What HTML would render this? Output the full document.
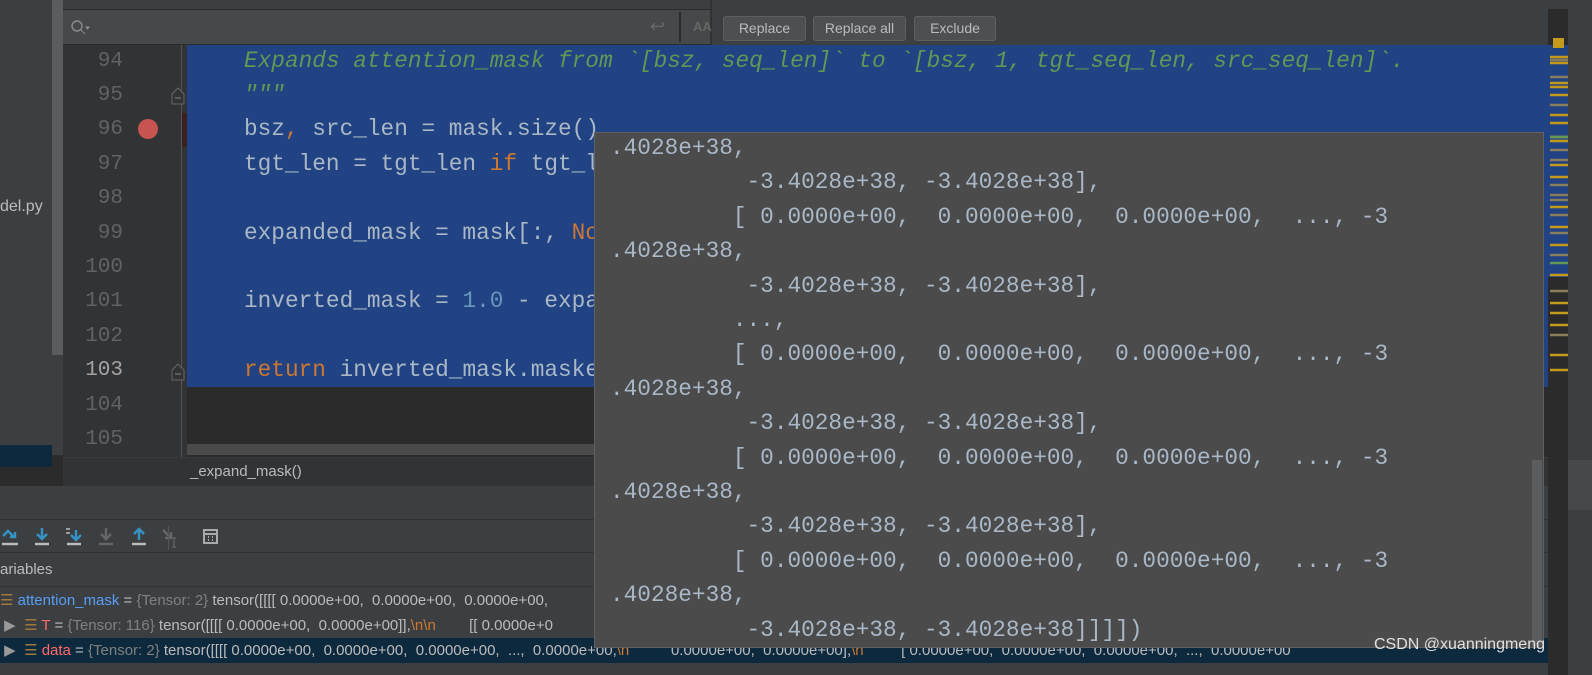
<!DOCTYPE html>
<html><head><meta charset="utf-8"><style>
body{margin:0;width:1592px;height:675px;overflow:hidden;background:#2b2b2b;position:relative;font-family:"Liberation Sans",sans-serif}
div{box-sizing:border-box}
.a{position:absolute}
.mono{font-family:"Liberation Mono","DejaVu Sans Mono",monospace;font-size:22.75px;white-space:pre}
.ln{position:absolute;left:63px;width:60px;text-align:right;color:#606366;font-family:"Liberation Mono",monospace;font-size:21px}
.code{position:absolute;left:244px;color:#a9b7c6}
.btn{position:absolute;top:16px;height:25px;border:1px solid #5e6060;border-radius:3px;background:#4c5052;color:#bbbbbb;font-size:14px;text-align:center;line-height:23px}
.pl{position:absolute;left:610px;color:#a9b7c6;font-family:"Liberation Mono",monospace;font-size:22.75px;white-space:pre;line-height:34.4px}
.row{position:absolute;left:0;width:1548px;height:25px;font-size:15px;color:#bbbbbb;white-space:pre;line-height:25px}
.g{color:#808080}
</style></head><body>
<div class="a" style="left:0;top:0;width:52px;height:457px;background:#3c3f41"></div>
<div class="a" style="left:0;top:445px;width:52px;height:22px;background:#0d293e"></div>
<div class="a" style="left:0;top:198px;color:#bbb;font-size:16px">del.py</div>
<div class="a" style="left:52px;top:0;width:11px;height:355px;background:#5a5d5f"></div>
<div class="a" style="left:52px;top:355px;width:11px;height:100px;background:#3c3f41"></div>
<div class="a" style="left:63px;top:0;width:1529px;height:10px;background:#3c3f41;border-bottom:1px solid #2b2b2b"></div>
<div class="a" style="left:63px;top:10px;width:647px;height:34px;background:#45494a"></div>
<div class="a" style="left:710px;top:0;width:838px;height:45px;background:#3c3f41;border-left:2px solid #323232"></div>
<svg class="a" style="left:70px;top:18px" width="24" height="18"><circle cx="7" cy="8" r="5" fill="none" stroke="#8c8c8c" stroke-width="1.4"/><path d="M11 12l4 4M16 9l3 0l-1.5 2z" stroke="#8c8c8c" fill="#8c8c8c"/></svg>
<div class="a" style="left:679px;top:12px;width:2px;height:30px;background:#2b2b2b"></div>
<div class="a" style="left:650px;top:16px;color:#666;font-size:18px">↩</div>
<div class="a" style="left:693px;top:19px;color:#666;font-size:13px;font-weight:bold">AA</div>
<div class="btn" style="left:723px;width:83px">Replace</div>
<div class="btn" style="left:813px;width:93px">Replace all</div>
<div class="btn" style="left:914px;width:82px">Exclude</div>
<div class="a" style="left:63px;top:45px;width:124px;height:412px;background:#313335"></div>
<div class="a" style="left:181px;top:45px;width:1px;height:412px;background:#555"></div>
<div class="a" style="left:182px;top:113px;width:5px;height:34px;background:#3b2020"></div>
<div class="a" style="left:187px;top:45px;width:1361px;height:342px;background:#214283"></div>
<div class="a" style="left:187px;top:444px;width:407px;height:11px;background:#4a4a4a"></div>
<div class="a" style="left:138px;top:119px;width:20px;height:20px;border-radius:50%;background:#c75450"></div>
<svg class="a" style="left:170px;top:86px" width="18" height="20"><path d="M2 8L8 2L14 8V18H2Z" fill="#313335" stroke="#666"/><path d="M5 12h6" stroke="#888"/></svg>
<svg class="a" style="left:170px;top:362px" width="18" height="20"><path d="M2 8L8 2L14 8V18H2Z" fill="#313335" stroke="#666"/><path d="M5 12h6" stroke="#888"/></svg>
<div class="ln" style="top:50px">94</div><div class="ln" style="top:84px">95</div><div class="ln" style="top:118px">96</div><div class="ln" style="top:153px">97</div><div class="ln" style="top:187px">98</div><div class="ln" style="top:222px">99</div><div class="ln" style="top:256px">100</div><div class="ln" style="top:290px">101</div><div class="ln" style="top:325px">102</div><div class="ln" style="top:359px;color:#a4a3a3">103</div><div class="ln" style="top:394px">104</div><div class="ln" style="top:428px">105</div>
<div class="code mono" style="top:48px;color:#629755;font-style:italic">Expands attention_mask from `[bsz, seq_len]` to `[bsz, 1, tgt_seq_len, src_seq_len]`.</div>
<div class="code mono" style="top:82px;color:#629755;font-style:italic">"""</div>
<div class="code mono" style="top:116px">bsz<span style="color:#cc7832">,</span> src_len = mask.size()</div>
<div class="code mono" style="top:151px">tgt_len = tgt_len <span style="color:#cc7832">if</span> tgt_l</div>
<div class="code mono" style="top:220px">expanded_mask = mask[:, <span style="color:#cc7832">No</span></div>
<div class="code mono" style="top:288px">inverted_mask = <span style="color:#6897bb">1.0</span> - expa</div>
<div class="code mono" style="top:357px"><span style="color:#cc7832">return</span> inverted_mask.maske</div>
<div class="a" style="left:63px;top:457px;width:1485px;height:29px;background:#313335;border-top:1px solid #3a3a3a"></div>
<div class="a" style="left:190px;top:463px;color:#bbb;font-size:15px">_expand_mask()</div>
<div class="a" style="left:0;top:486px;width:1548px;height:189px;background:#3c3f41"></div>
<div class="a" style="left:0;top:519px;width:1548px;height:1px;background:#323232"></div>
<div class="a" style="left:0;top:552px;width:1548px;height:1px;background:#323232"></div>
<div class="a" style="left:0;top:586px;width:1548px;height:1px;background:#323232"></div>
<svg class="a" style="left:0;top:524px" width="200" height="26">
<g stroke-width="2.4" fill="none">
<path d="M3 12l5-5 6 6M10 13h5v-5" stroke="#3592c4"/><path d="M2 20h16" stroke="#bbb"/>
<path d="M42 4v10M37 10l5 5 5-5" stroke="#3592c4"/><path d="M35 20h14" stroke="#bbb"/>
<path d="M76 6v9M71 11l5 5 5-5" stroke="#3592c4"/><path d="M66 5h4M66 9h4" stroke="#bbb" stroke-width="1.5"/><path d="M67 20h14" stroke="#bbb"/>
<path d="M106 4v10M101 10l5 5 5-5" stroke="#666"/><path d="M99 20h14" stroke="#666"/>
<path d="M139 16V6M134 10l5-5 5 5" stroke="#3592c4"/><path d="M132 20h14" stroke="#bbb"/>
<path d="M163 6l8 8M171 8v6h-6" stroke="#666"/><path d="M174 14v9M172 14h4M172 23h4" stroke="#666" stroke-width="1.2"/>
</g></svg>
<div class="a" style="left:168px;top:526px;width:1px;height:24px;background:#555"></div>
<svg class="a" style="left:203px;top:529px" width="16" height="16"><rect x="1" y="1" width="13" height="13" fill="none" stroke="#aaa" stroke-width="2"/><path d="M1 5h13M5 8h1M9 8h1M5 11h1M9 11h1" stroke="#aaa" stroke-width="2"/></svg>
<div class="a" style="left:0;top:561px;color:#bbb;font-size:15px">ariables</div>
<div class="row" style="top:588px"><span style="color:#a0793a">☰</span> <span style="color:#589df6">attention_mask</span> = <span class="g">{Tensor: 2}</span> tensor([[[[ 0.0000e+00,  0.0000e+00,  0.0000e+00,</div>
<div class="row" style="top:613px"> <span style="color:#999">▶</span>  <span style="color:#a0793a">☰</span> <span style="color:#ff6b68">T</span> = <span class="g">{Tensor: 116}</span> tensor([[[[ 0.0000e+00,  0.0000e+00]],<span style="color:#cc7832">\n\n</span>        [[ 0.0000e+0</div>
<div class="row" style="top:638px;background:#0d293e"> <span style="color:#999">▶</span>  <span style="color:#a0793a">☰</span> <span style="color:#ff6b68">data</span> = <span class="g">{Tensor: 2}</span> tensor([[[[ 0.0000e+00,  0.0000e+00,  0.0000e+00,  ...,  0.0000e+00,<span style="color:#cc7832">\n</span>          0.0000e+00,  0.0000e+00],<span style="color:#cc7832">\n</span>         [ 0.0000e+00,  0.0000e+00,  0.0000e+00,  ...,  0.0000e+00</div>
<div class="a" style="left:1548px;top:45px;width:20px;height:630px;background:#2b2b2b"></div>
<div class="a" style="left:1548px;top:45px;width:20px;height:232px;background:#214283"></div>
<div class="a" style="left:1553px;top:38px;width:11px;height:10px;background:#c49a1d"></div>
<svg class="a" style="left:1550px;top:55px" width="18" height="320">
<g stroke-width="2.5">
<path d="M0 2h18M0 8h18M0 28h18M0 32h18M0 40h18M0 60h18M0 68h18M0 82h18M0 86h18M0 110h18M0 122h18M0 152h18M0 172h18M0 190h18M0 220h18M0 248h18M0 258h18M0 270h18M0 300h18M0 315h18" stroke="#c49a1d"/>
<path d="M0 5h18M0 22h18M0 50h18M0 95h18M0 105h18M0 130h18M0 140h18M0 145h18M0 160h18M0 178h18M0 200h18M0 236h18M0 280h18" stroke="#8a7d5a"/>
<path d="M0 82h18M0 208h18" stroke="#629755"/>
</g></svg>
<div class="a" style="left:1568px;top:0;width:24px;height:675px;background:#3c3f41"></div>
<div class="a" style="left:1568px;top:460px;width:24px;height:50px;background:#45494a"></div>
<div class="a" style="left:594px;top:132px;width:950px;height:516px;background:#4b4b4b;border:1px solid #616161"></div>
<div class="a" style="left:1532px;top:460px;width:10px;height:186px;background:#5b5d5f"></div>
<div class="pl" style="top:131px">.4028e+38,
          -3.4028e+38, -3.4028e+38],
         [ 0.0000e+00,  0.0000e+00,  0.0000e+00,  ..., -3
.4028e+38,
          -3.4028e+38, -3.4028e+38],
         ...,
         [ 0.0000e+00,  0.0000e+00,  0.0000e+00,  ..., -3
.4028e+38,
          -3.4028e+38, -3.4028e+38],
         [ 0.0000e+00,  0.0000e+00,  0.0000e+00,  ..., -3
.4028e+38,
          -3.4028e+38, -3.4028e+38],
         [ 0.0000e+00,  0.0000e+00,  0.0000e+00,  ..., -3
.4028e+38,
          -3.4028e+38, -3.4028e+38]]]])</div>
<div class="a" style="left:1374px;top:636px;color:#e0e0e0;font-size:16px;white-space:pre">CSDN @xuanningmeng</div>
</body></html>
